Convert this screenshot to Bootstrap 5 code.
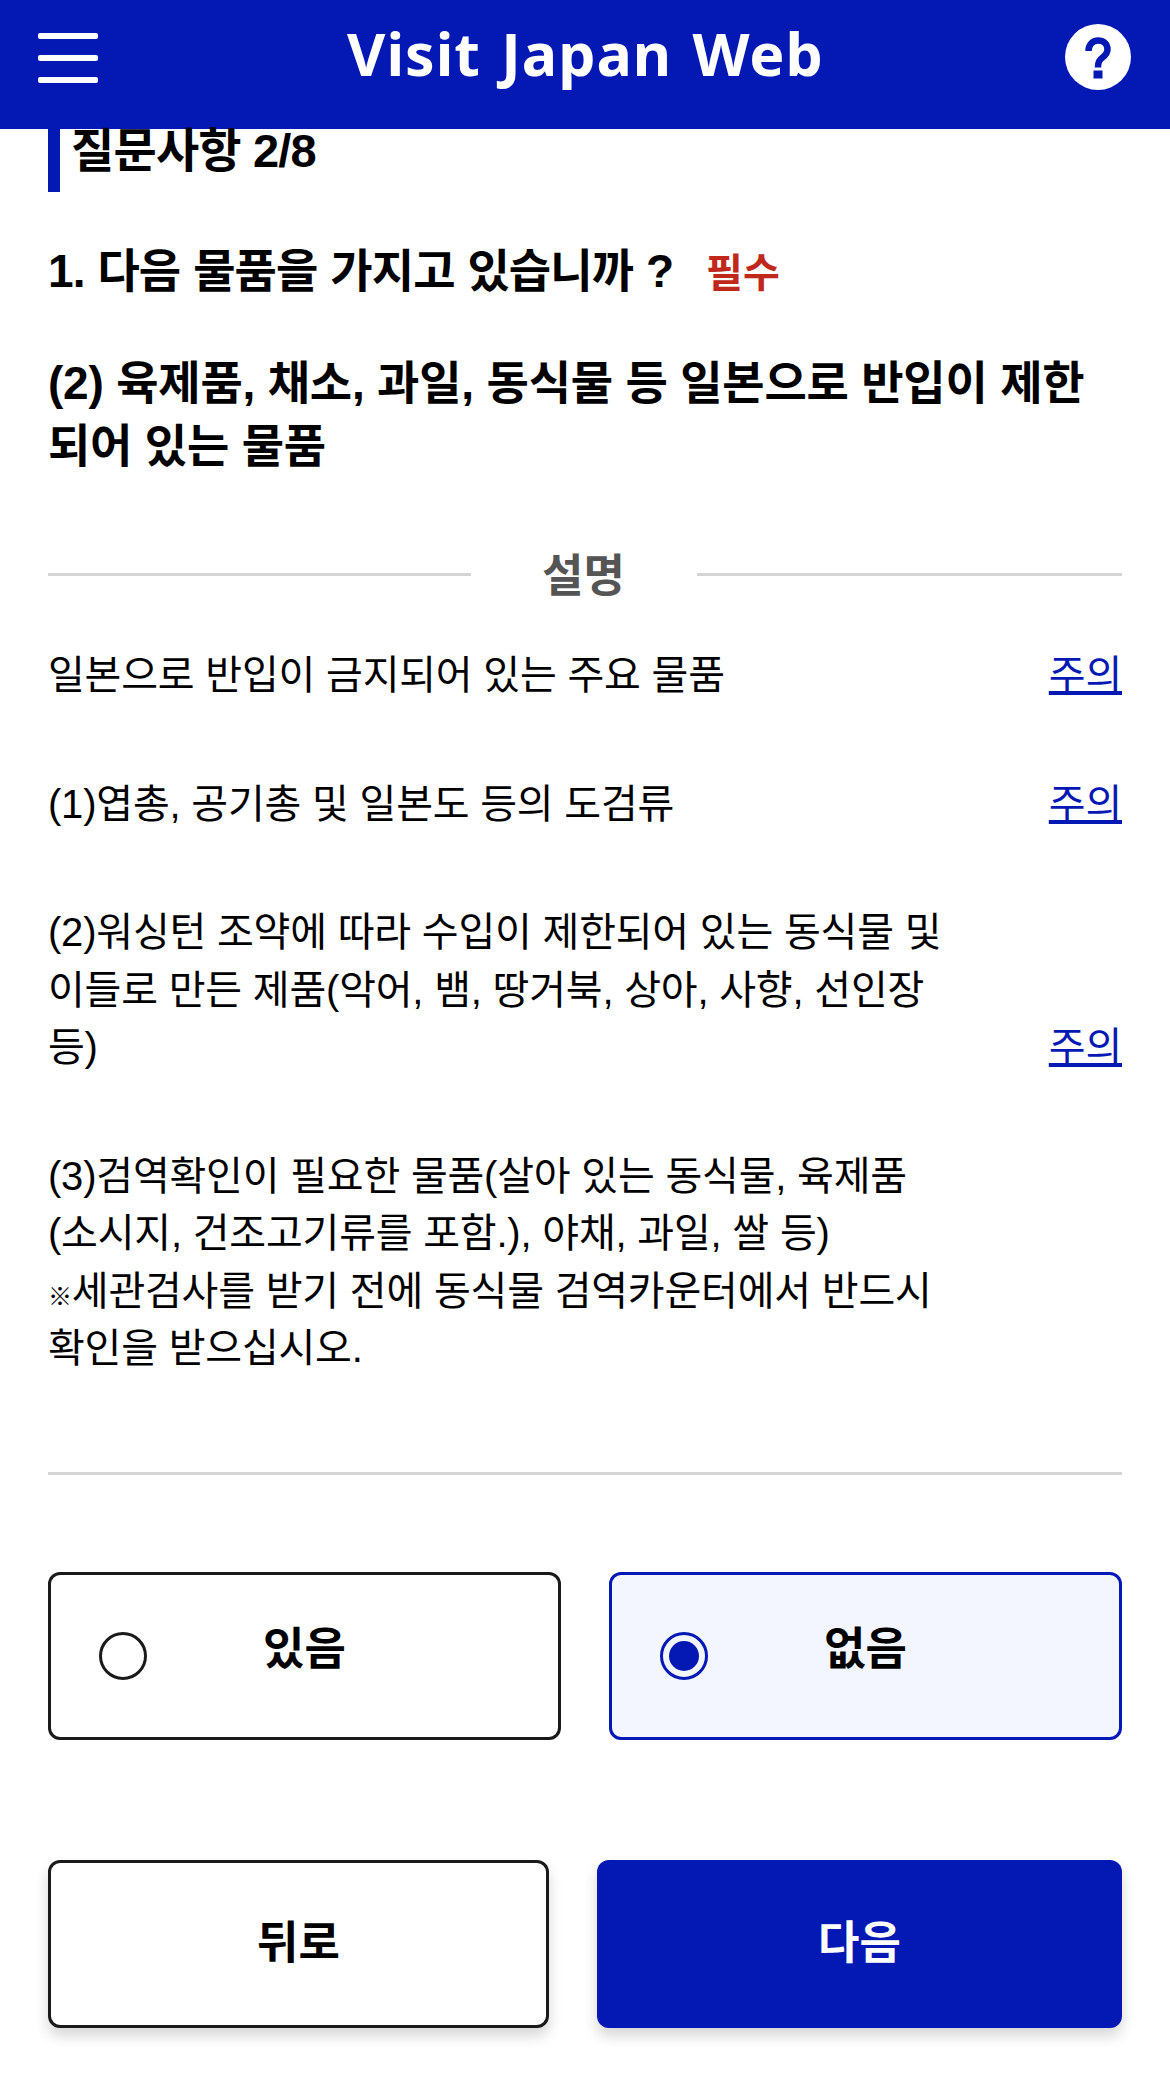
<!DOCTYPE html>
<html lang="ko">
<head>
  <meta charset="UTF-8">
  <title>Visit Japan Web</title>
  <link href="https://cdn.jsdelivr.net/npm/bootstrap@5.3.0/dist/css/bootstrap.min.css" rel="stylesheet" />
  <style>
    body {
      font-family: "Liberation Sans", "Noto Sans CJK KR", sans-serif;
      color: #000;
      font-size: 40px;
      line-height: 57.5px;
      letter-spacing: -0.2px;
    }

    .vjw-header {
      height: 129px;
      background-color: #0418b4;
      padding: 24px 39px 0 38px;
    }

    .vjw-title {
      font-family: "Noto Sans", "Open Sans", sans-serif;
      font-weight: 700;
      font-size: 59px;
      line-height: 58px;
      letter-spacing: 1px;
      word-spacing: 4px;
      color: #fff;
      margin-left: 8px;
    }

    .burger {
      padding-top: 9px;
    }

    .burger span {
      display: block;
      width: 60px;
      height: 6px;
      border-radius: 2px;
      background-color: #fff;
      margin-bottom: 16px;
    }

    .vjw-main {
      padding: 0 48px;
    }

    .step-title {
      height: 63px;
      border-left: 12px solid #0418b4;
      padding-left: 11px;
      font-size: 47px;
      font-weight: 700;
      line-height: 44px;
      letter-spacing: -0.8px;
    }

    .q-line {
      margin-top: 50px;
      font-size: 46px;
      font-weight: 700;
      line-height: 58px;
      letter-spacing: -0.9px;
      word-spacing: 1px;
    }

    .req {
      font-size: 40px;
      color: #c0281c;
      margin-left: 20px;
      letter-spacing: 0;
    }

    .q-sub {
      margin-top: 50px;
      font-size: 46px;
      font-weight: 700;
      line-height: 63px;
      margin-bottom: 0;
      letter-spacing: -0.2px;
    }

    .note-head {
      margin-top: 64px;
      color: #555;
      font-size: 45px;
      font-weight: 700;
      line-height: 58px;
      letter-spacing: 0;
    }

    .note-word {
      padding-top: 6px;
    }

    .note-head::before, .note-head::after {
      content: "";
      height: 3px;
      background-color: #d5d5d5;
    }

    .note-head::before {
      width: 423px;
      margin-right: 71px;
    }

    .note-head::after {
      flex-grow: 1;
      margin-left: 72px;
    }

    .note-row {
      margin-top: 41px;
    }

    .note-row + .note-row {
      margin-top: 71px;
    }

    .note-text {
      width: 930px;
    }

    .note-row a {
      color: #0418b4;
    }

    .ref-mark {
      font-size: 24px;
      line-height: 0;
    }

    .rule-end {
      height: 3px;
      background-color: #d5d5d5;
      margin-top: 94px;
    }

    .pick {
      width: 513px;
      height: 168px;
      border: 3px solid #1a1a1a;
      border-radius: 12px;
      padding-left: 48px;
    }

    .pick-on {
      border-color: #0418b4;
      background-color: #f3f6fe;
    }

    .pick-label {
      flex-grow: 1;
      text-align: center;
      font-weight: 700;
      font-size: 45px;
      letter-spacing: 0;
      margin-right: 48px;
      margin-top: -12px;
      margin-left: -48px;
    }

    .dot {
      width: 48px;
      height: 48px;
      border: 3px solid #1a1a1a;
      border-radius: 50%;
      flex-shrink: 0;
      position: relative;
      z-index: 1;
    }

    .dot-on {
      border-color: #0418b4;
      padding: 6px;
    }

    .dot-on span {
      display: block;
      height: 100%;
      border-radius: 50%;
      background-color: #0418b4;
    }

    .pick-row {
      margin-top: 97px;
    }

    .btn-row {
      margin-top: 120px;
      padding-bottom: 62px;
    }

    .go-btn {
      height: 168px;
      border-radius: 12px;
      font-size: 45px;
      font-weight: 700;
      box-shadow: 0 8px 14px rgba(0, 0, 0, .16);
    }

    .go-back {
      width: 501px;
      border: 3px solid #1a1a1a;
      background-color: #fff;
      color: #000;
    }

    .go-next {
      width: 525px;
      border: 0;
      background-color: #0418b4;
      color: #fff;
    }
  </style>
</head>
<body>
  <header class="vjw-header d-flex justify-content-between align-items-start">
    <div class="burger"><span></span><span></span><span></span></div>
    <div class="vjw-title">Visit Japan Web</div>
    <svg width="66" height="66" viewBox="0 0 66 66">
      <circle cx="33" cy="33" r="33" fill="#fff"/>
      <path d="M23.500 27c0-6 4-10.500 9.500-10.500s9.500 3.500 9.500 9c0 4-2.500 6-5 8-3 2.500-4.500 4-4.500 10" fill="none" stroke="#0418b4" stroke-width="6.500"/>
      <rect x="28.500" y="46.500" width="9" height="8" fill="#0418b4"/>
    </svg>
  </header>

  <main class="vjw-main">
    <div class="step-title">질문사항 2/8</div>

    <div class="q-line">1. 다음 물품을 가지고 있습니까 ? <span class="req">필수</span></div>
    <p class="q-sub">(2) 육제품, 채소, 과일, 동식물 등 일본으로 반입이 제한<br>되어 있는 물품</p>

    <div class="note-head d-flex align-items-center"><span class="note-word">설명</span></div>

    <div class="note-row d-flex justify-content-between align-items-end">
      <div class="note-text">일본으로 반입이 금지되어 있는 주요 물품</div>
      <a href="#">주의</a>
    </div>
    <div class="note-row d-flex justify-content-between align-items-end">
      <div class="note-text">(1)엽총, 공기총 및 일본도 등의 도검류</div>
      <a href="#">주의</a>
    </div>
    <div class="note-row d-flex justify-content-between align-items-end">
      <div class="note-text">(2)워싱턴 조약에 따라 수입이 제한되어 있는 동식물 및<br>이들로 만든 제품(악어, 뱀, 땅거북, 상아, 사향, 선인장<br>등)</div>
      <a href="#">주의</a>
    </div>
    <div class="note-row d-flex justify-content-between align-items-end">
      <div class="note-text">(3)검역확인이 필요한 물품(살아 있는 동식물, 육제품<br>(소시지, 건조고기류를 포함.), 야채, 과일, 쌀 등)<br><span class="ref-mark">※</span>세관검사를 받기 전에 동식물 검역카운터에서 반드시<br>확인을 받으십시오.</div>
    </div>

    <div class="rule-end"></div>

    <div class="pick-row d-flex justify-content-between">
      <div class="pick d-flex align-items-center">
        <div class="dot"></div>
        <div class="pick-label">있음</div>
      </div>
      <div class="pick pick-on d-flex align-items-center">
        <div class="dot dot-on"><span></span></div>
        <div class="pick-label">없음</div>
      </div>
    </div>

    <div class="btn-row d-flex justify-content-between">
      <button type="button" class="btn go-btn go-back">뒤로</button>
      <button type="button" class="btn go-btn go-next">다음</button>
    </div>
  </main>

  <script src="https://cdn.jsdelivr.net/npm/bootstrap@5.3.0/dist/js/bootstrap.bundle.min.js"></script>
</body>
</html>
